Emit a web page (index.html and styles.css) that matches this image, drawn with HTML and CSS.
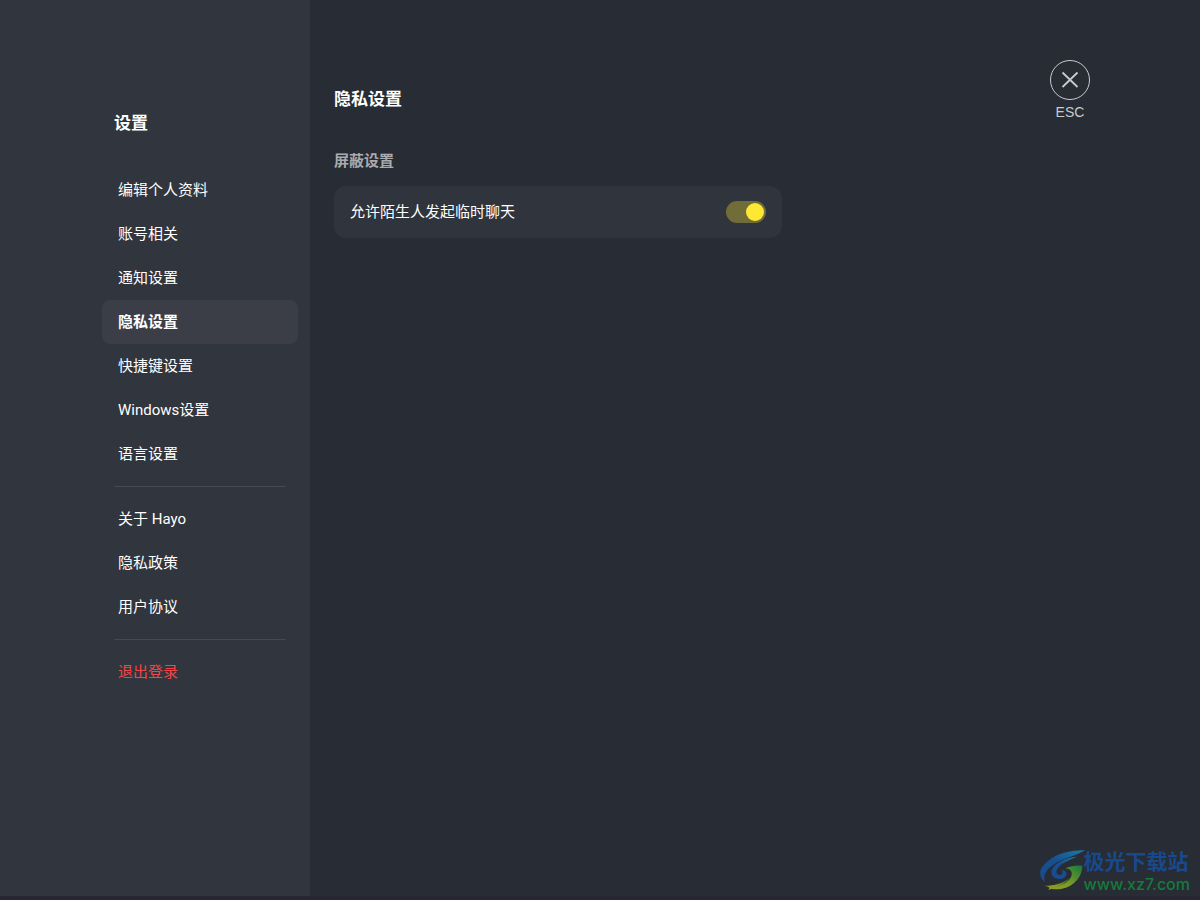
FILE: index.html
```
<!DOCTYPE html>
<html lang="zh-CN">

<head>
    <meta charset="UTF-8">
    <meta name="viewport" content="width=device-width, initial-scale=1.0">
    <title>隐私设置</title>

    <link rel="stylesheet" href="styles.css">
</head>

<body>
    <div class="settings">
        <aside class="sidebar">
            <h2>设置</h2>
            <nav>
                <a href="#profile">编辑个人资料</a>
                <a href="#account">账号相关</a>
                <a href="#notify">通知设置</a>
                <a href="#privacy" class="active">隐私设置</a>
                <a href="#hotkeys">快捷键设置</a>
                <a href="#windows">Windows设置</a>
                <a href="#language">语言设置</a>
                <hr>
                <a href="#about">关于 Hayo</a>
                <a href="#policy">隐私政策</a>
                <a href="#terms">用户协议</a>
                <hr>
                <button type="button" class="logout">退出登录</button>
            </nav>
        </aside>

        <main class="content">
            <section class="panel">
                <h1>隐私设置</h1>
                <h3>屏蔽设置</h3>
                <div class="card">
                    <label for="strangerChat">允许陌生人发起临时聊天</label>
                    <input type="checkbox" id="strangerChat" class="switch" checked>
                </div>
            </section>

            <button type="button" class="close">
                <svg width="40" height="40" viewBox="0 0 40 40" fill="none" stroke="#c9cacd">
                    <circle cx="20" cy="20" r="19.5" />
                    <path d="M12.5 12.5 L27.5 27 M27.5 12.5 L12.5 27" stroke-width="1.8" />
                </svg>
                <span>ESC</span>
            </button>
        </main>
    </div>

    <div class="watermark">
        <svg width="46" height="40" viewBox="12 15 138 120">
            <defs>
                <linearGradient id="blue" x1="0" y1="1" x2="1" y2="0">
                    <stop offset="0" stop-color="#194a90" />
                    <stop offset="0.5" stop-color="#17508f" />
                    <stop offset="1" stop-color="#1a7ba6" />
                </linearGradient>
                <linearGradient id="green" x1="0" y1="1" x2="1" y2="0">
                    <stop offset="0" stop-color="#9a9a22" />
                    <stop offset="0.4" stop-color="#7f9a26" />
                    <stop offset="1" stop-color="#167a3c" />
                </linearGradient>
            </defs>
            <path fill="url(#blue)" d="M148 16 C105 15 65 24 36 48 C6 72 7 94 27 112 C21 92 28 77 50 61 C76 41 112 36 148 16 Z" />
            <path fill="url(#blue)" d="M122 35 C80 38 47 62 46 82 C46 101 70 107 85 98 C97 88 91 73 75 76 C83 80 80 90 72 90 C59 89 58 77 68 66 C80 52 102 45 122 35 Z" />
            <path fill="url(#green)" d="M88 70 C106 62 126 60 139 63 C139 92 118 124 75 132 C60 134 45 132 38 129 C76 126 104 108 107 90 C109 78 102 72 88 70 Z" />
            <path fill="url(#green)" d="M25 122 C55 122 83 114 101 98 C89 118 57 130 36 134 C42 129 44 127 25 122 Z" />
        </svg>
        <div class="watermark-text">
            <span class="site-name">极光下载站</span>
            <span class="site-url">www.xz7.com</span>
        </div>
    </div>
</body>

</html>
```
FILE: styles.css
```
* {
    box-sizing: border-box;
}

body {
    margin: 0;
    font-family: Roboto, "Noto Sans CJK SC", sans-serif;
    font-size: 15px;
    color: #fff;
    background-color: #282c34;
}

.settings {
    display: flex;
    min-height: 100vh;
    border-bottom: 4px solid #272733;
}

.sidebar {
    width: 310px;
    flex-shrink: 0;
    padding: 110px 12px 40px 102px;
    background-color: #31353d;
}

h1, h2, h3 {
    margin: 0;
}

h1, h2 {
    font-size: 17px;
    line-height: 26px;
}

.sidebar h2 {
    padding-left: 12px;
    margin-bottom: 32px;
}

nav {
    display: flex;
    flex-direction: column;
}

nav a, .logout {
    height: 44px;
    padding: 0 16px;
    border: none;
    border-radius: 8px;
    background: none;
    font: inherit;
    line-height: 44px;
    text-align: left;
    text-decoration: none;
    color: #fff;
    cursor: pointer;
}

nav a:hover {
    background-color: #363a42;
}

nav a.active {
    background-color: #3b3e46;
    font-weight: bold;
}

nav hr {
    width: 172px;
    height: 1px;
    margin: 10px 12px;
    border: none;
    background-color: #46494f;
}

nav .logout {
    color: #f04848;
}

.content {
    flex: 1;
    display: flex;
    justify-content: space-between;
    align-items: flex-start;
    padding: 60px 110px 40px 24px;
}

.panel {
    flex: 1;
    max-width: 448px;
    padding-top: 26px;
}

h3 {
    margin: 38px 0 14px;
    font-size: 15px;
    line-height: 22px;
    color: #a9abae;
}

.card {
    display: flex;
    justify-content: space-between;
    align-items: center;
    height: 52px;
    padding: 0 16px;
    border-radius: 12px;
    line-height: 20px;
    background-color: #30343c;
}

.switch {
    appearance: none;
    display: flex;
    justify-content: flex-end;
    width: 40px;
    height: 22px;
    margin: 0;
    padding: 2px;
    border-radius: 11px;
    background-color: #716d39;
    cursor: pointer;
}

.switch::before {
    content: "";
    width: 18px;
    height: 18px;
    border-radius: 50%;
    background-color: #ffe833;
}

.switch:not(:checked) {
    justify-content: flex-start;
    background-color: #4a4e56;
}

.close {
    display: flex;
    flex-direction: column;
    align-items: center;
    gap: 2px;
    width: 40px;
    padding: 0;
    border: none;
    background: none;
    font-family: "Liberation Sans", sans-serif;
    font-size: 14px;
    line-height: 20px;
    color: #c9cacd;
    cursor: pointer;
}

.watermark {
    position: absolute;
    right: 10px;
    bottom: 6px;
    display: flex;
    align-items: flex-start;
}

.watermark-text {
    display: flex;
    flex-direction: column;
    margin-left: -2px;
}

.site-name {
    font-size: 21px;
    line-height: 24px;
    font-weight: bold;
    color: #174a8c;
}

.site-url {
    font-family: Inter, sans-serif;
    font-size: 16px;
    font-weight: 500;
    line-height: 20px;
    color: #167a3c;
}
```
